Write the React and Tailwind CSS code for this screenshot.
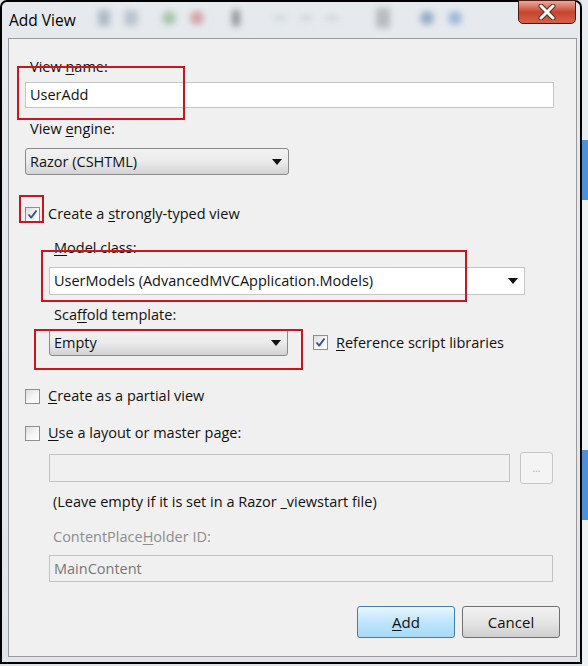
import React from "react";

const font = { fontFamily: '"Open Sans", "Noto Sans", sans-serif' };

function Key({ children }) {
  return <span className="underline underline-offset-2">{children}</span>;
}

function Check({ checked }) {
  return (
    <div className="w-[15px] h-[15px] border border-[#8e8f8f] bg-gradient-to-br from-[#dcdcdc] via-[#f4f4f4] to-white flex items-center justify-center shrink-0">
      {checked && (
        <svg width="11" height="11" viewBox="0 0 11 11">
          <path d="M1.5 5.5 L4.2 8.6 L9.5 1.5" fill="none" stroke="#3b5393" strokeWidth="1.9" strokeLinejoin="round" />
        </svg>
      )}
    </div>
  );
}

function Arrow() {
  return (
    <svg width="10" height="6" viewBox="0 0 10 6" className="shrink-0">
      <path d="M0 0 L10 0 L5 6 Z" fill="#111" />
    </svg>
  );
}

function Select({ value, className }) {
  return (
    <div className={`flex items-center justify-between pl-[4px] pr-[6px] border border-[#8a8a8a] rounded-[3px] bg-gradient-to-b from-[#f2f2f2] via-[#ebebeb] to-[#d3d3d3] ${className}`}>
      <span>{value}</span>
      <Arrow />
    </div>
  );
}

export default function App() {
  return (
    <div className="w-[588px] h-[666px] bg-[#dfe3e8] flex text-[14.5px] leading-[20px] text-[#111]" style={font}>
      <div className="w-[582px] h-[664px] border-2 border-black rounded-t-[7px] bg-gradient-to-b from-[#e6eaee] to-[#e1e5ea] flex flex-col">
        {/* title bar */}
        <div className="h-[36px] flex items-start relative">
          <span className="ml-[7px] mt-[8px] text-[15.5px] text-black">Add View</span>
          <div className="flex items-center gap-[14px] ml-[22px] mt-[6px] opacity-50 blur-[3px]">
            <div className="w-[12px] h-[16px] bg-[#7a8a9c]" />
            <div className="w-[14px] h-[16px] bg-[#90a0b0] rounded-sm" />
            <div className="w-[14px] h-[14px] bg-[#6aa070] rounded-full ml-[10px]" />
            <div className="w-[14px] h-[14px] bg-[#c06060] rounded-full" />
            <div className="w-[8px] h-[16px] bg-[#444] ml-[14px]" />
            <div className="w-[12px] h-[4px] bg-[#b0b8c0] ml-[20px]" />
            <div className="w-[12px] h-[4px] bg-[#b0b8c0]" />
            <div className="w-[12px] h-[4px] bg-[#b0b8c0]" />
            <div className="w-[14px] h-[20px] bg-[#8a8f96] ml-[24px]" />
            <div className="w-[14px] h-[14px] bg-[#4a6f9c] rounded-full ml-[16px]" />
            <div className="w-[14px] h-[14px] bg-[#5a86c4] rounded-full" />
          </div>
          <div className="absolute right-[4px] top-[-2px] w-[58px] h-[24px] rounded-b-[5px] border border-[#4a1a12] bg-gradient-to-b from-[#e8a99c] via-[#c7442e] to-[#d5614b] flex items-center justify-center">
            <svg width="20" height="16" viewBox="0 0 20 16">
              <path d="M4 2 L16 14 M16 2 L4 14" stroke="#5a2a20" strokeWidth="5" strokeLinecap="round" />
              <path d="M4 2 L16 14 M16 2 L4 14" stroke="#fff" strokeWidth="3" strokeLinecap="round" />
            </svg>
          </div>
        </div>

        {/* content panel */}
        <div className="relative flex-1 ml-[6px] mr-[3px] mb-[5px] border border-[#9a9a9a] bg-[#f0f0f0] flex flex-col pl-[16px] pt-[18px]">
          <div className="ml-[5px]">View <Key>n</Key>ame:</div>
          <div className="mt-[5px] w-[529px] h-[26px] border border-[#c5c5c5] bg-white px-[4px] flex items-center">UserAdd</div>

          <div className="mt-[11px] ml-[5px]">View <Key>e</Key>ngine:</div>
          <Select value="Razor (CSHTML)" className="mt-[9px] w-[264px] h-[27px]" />

          <div className="mt-[29px] flex items-center gap-[8px]">
            <Check checked />
            <span>Create a <Key>s</Key>trongly-typed view</span>
          </div>

          <div className="ml-[24px] flex flex-col">
            <div className="mt-[14px] ml-[5px]"><Key>M</Key>odel class:</div>
            <div className="mt-[9px] w-[476px] h-[28px] border border-[#c5c5c5] bg-white pl-[4px] pr-[6px] flex items-center justify-between">
              <span>UserModels (AdvancedMVCApplication.Models)</span>
              <Arrow />
            </div>

            <div className="mt-[10px] ml-[5px]">Sca<Key>f</Key>fold template:</div>
            <div className="mt-[4px] flex items-center">
              <Select value="Empty" className="w-[239px] h-[27px]" />
              <div className="ml-[25px] flex items-center gap-[8px]">
                <Check checked />
                <span><Key>R</Key>eference script libraries</span>
              </div>
            </div>
          </div>

          <div className="mt-[30px] flex items-center gap-[8px]">
            <Check />
            <span><Key>C</Key>reate as a partial view</span>
          </div>

          <div className="mt-[17px] flex items-center gap-[8px]">
            <Check />
            <span><Key>U</Key>se a layout or master page:</span>
          </div>

          <div className="ml-[24px] flex flex-col">
            <div className="mt-[9px] flex items-center gap-[10px]">
              <div className="w-[461px] h-[28px] border border-[#c2c2c2] bg-[#f0f0f0]" />
              <div className="w-[33px] h-[32px] border border-[#c6c6c6] rounded-[3px] bg-[#f4f4f4] flex items-center justify-center text-[10px] text-[#aaa]">...</div>
            </div>
            <div className="mt-[8px] ml-[4px]">(Leave empty if it is set in a Razor _viewstart file)</div>
            <div className="mt-[15px] ml-[4px] text-[#8d8d8d]">ContentPlace<Key>H</Key>older ID:</div>
            <div className="mt-[8px] w-[504px] h-[27px] border border-[#c2c2c2] bg-[#f0f0f0] px-[4px] flex items-center text-[#777]">MainContent</div>
          </div>

          <div className="mt-[24px] flex justify-end gap-[7px] pr-[16px]">
            <button className="w-[98px] h-[32px] rounded-[3px] border border-[#3c7fb1] bg-gradient-to-b from-[#eaf6fd] via-[#bee6fd] to-[#a7d9f5] text-[15px]">
              <Key>A</Key>dd
            </button>
            <button className="w-[98px] h-[32px] rounded-[3px] border border-[#707070] bg-gradient-to-b from-[#f2f2f2] via-[#e5e5e5] to-[#cfcfcf] text-[15px]">
              Cancel
            </button>
          </div>

          {/* red annotation boxes */}
          <div className="absolute left-[8px] top-[27px] w-[168px] h-[54px] border-2 border-[#c8161d]" />
          <div className="absolute left-[10px] top-[156px] w-[25px] h-[28px] border-2 border-[#c8161d]" />
          <div className="absolute left-[32px] top-[211px] w-[426px] h-[52px] border-2 border-[#c8161d]" />
          <div className="absolute left-[25px] top-[290px] w-[269px] h-[41px] border-2 border-[#c8161d]" />
        </div>
      </div>
      <div className="flex-1 flex flex-col">
        <div className="h-[140px] bg-[#e8ecf0]" />
        <div className="h-[60px] bg-[#4f8fd8]" />
        <div className="h-[250px] bg-[#eef1f4]" />
        <div className="h-[70px] bg-[#4f8fd8]" />
        <div className="flex-1 bg-[#eef1f4]" />
      </div>
    </div>
  );
}
